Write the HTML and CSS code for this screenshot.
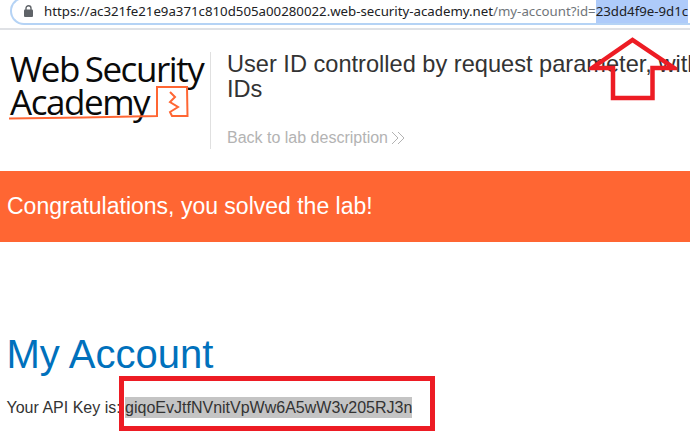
FILE: index.html
```html
<!DOCTYPE html>
<html lang="en">
  <head>
    <meta charset="utf-8">
    <title>My Account</title>
    <link rel="stylesheet" href="styles.css">
  </head>
  <body>
    <!-- Browser address bar -->
    <div class="browser-bar">
      <div class="url-box">
        <svg class="lock" width="9" height="12" viewBox="0 0 9 12">
          <path d="M2 5V3.200a2.500 2.500 0 0 1 5 0V5" fill="none" stroke="#5f6368" stroke-width="1.400"/>
          <rect x="0" y="4.500" width="9" height="7.500" rx="1" fill="#5f6368"/>
        </svg>
        <span class="url"><span class="url-dark">https://ac321fe21e9a371c810d505a00280022.web-security-academy.net</span>/my-account?id=<span class="url-selected">23dd4f9e-9d1c</span></span>
      </div>
    </div>

    <!-- Lab header -->
    <div class="lab-header">
      <div class="logo">
        <div class="logo-line">Web Security</div>
        <div class="logo-line">Academy</div>
        <svg class="logo-mark" width="200" height="44" viewBox="0 0 200 44">
          <path d="M1 36.500C50 36 100 35 149 34V5H179L179.500 34H164L162 30L170 25L162 20L167 15L162 10" fill="none" stroke="#ff6633" stroke-width="2"/>
        </svg>
      </div>
      <div class="lab-title">
        <h2>User ID controlled by request parameter, with unpredictable user<br>IDs</h2>
        <a class="back-link" href="#">Back to lab description
          <svg width="15" height="14" viewBox="0 0 15 14"><path d="M1 1l6 6-6 6M7 1l6 6-6 6" fill="none" stroke="#b3b3b3" stroke-width="1"/></svg>
        </a>
      </div>
    </div>

    <div class="solved-banner">Congratulations, you solved the lab!</div>

    <div class="account">
      <h1>My Account</h1>
      <p>Your API Key is: <span class="api-key">giqoEvJtfNVnitVpWw6A5wW3v205RJ3n</span></p>
    </div>

    <!-- Red annotations drawn over the screenshot -->
    <svg class="arrow" width="88" height="66" viewBox="0 0 88 66">
      <path d="M3 31L43.500 3L85 31H63.500V61H24V31Z" fill="none" stroke="#ed1c24" stroke-width="4.500"/>
    </svg>
    <div class="key-box"></div>
  </body>
</html>
```

FILE: styles.css
```css
html, body {
    height: 100%;
}

body {
    margin: 0;
    overflow: hidden;
    position: relative;
    background-color: #ffffff;
    font-family: "Liberation Sans", Arial, sans-serif;
    color: #333333;
}

.browser-bar {
    height: 30px;
    box-sizing: border-box;
    border-bottom: 2px solid #dfe1e5;
    overflow: hidden;
}

.url-box {
    height: 28px;
    margin-top: -3px;
    margin-left: 10px;
    box-sizing: border-box;
    padding-left: 12px;
    display: flex;
    align-items: center;
    gap: 11px;
    border: 2px solid #b5d3f5;
    border-right: none;
    border-radius: 14px 0 0 14px;
    overflow: hidden;
    white-space: nowrap;
}

.lock {
    flex: none;
}

.url {
    font-family: "Noto Sans", sans-serif;
    font-size: 13.250px;
    color: #70757a;
}

.url-dark {
    color: #202124;
}

.url-selected {
    color: #202124;
    background-color: #aecbfa;
    padding: 4px 0;
}

.lab-header {
    height: 141px;
    display: flex;
    box-sizing: border-box;
    padding-top: 22px;
    padding-left: 10px;
    white-space: nowrap;
}

.logo {
    width: 200px;
    height: 97px;
    flex: none;
    position: relative;
    border-right: 1px solid #e0e0e0;
    font-family: "Open Sans", sans-serif;
    font-size: 35px;
    font-weight: 500;
    letter-spacing: -1.450px;
    word-spacing: -2px;
    line-height: 33px;
    color: #0a0a0a;
}

.logo-mark {
    position: absolute;
    left: -2px;
    top: 30px;
}

.lab-title {
    padding-left: 16px;
}

.lab-title h2 {
    margin: 0;
    font-size: 23.600px;
    font-weight: normal;
    line-height: 25px;
}

.back-link {
    display: flex;
    align-items: center;
    gap: 3px;
    margin-top: 27px;
    font-size: 16px;
    color: #b3b3b3;
    text-decoration: none;
}

.solved-banner {
    height: 71px;
    padding-left: 7px;
    display: flex;
    align-items: center;
    background-color: #ff6633;
    color: #ffffff;
    font-size: 23px;
}

.account {
    padding-left: 6.500px;
    padding-top: 90px;
}

.account h1 {
    margin: 0;
    font-size: 40px;
    font-weight: normal;
    line-height: 45px;
    color: #0071bc;
}

.account p {
    margin: 20px 0 0;
    font-size: 16px;
    line-height: 22px;
}

.api-key {
    background-color: #c4c4c4;
    padding: 2px 0;
}

.arrow {
    position: absolute;
    left: 589px;
    top: 37px;
}

.key-box {
    position: absolute;
    left: 119px;
    top: 376px;
    width: 316px;
    height: 55px;
    box-sizing: border-box;
    border: 5px solid #ed1c24;
}
```
